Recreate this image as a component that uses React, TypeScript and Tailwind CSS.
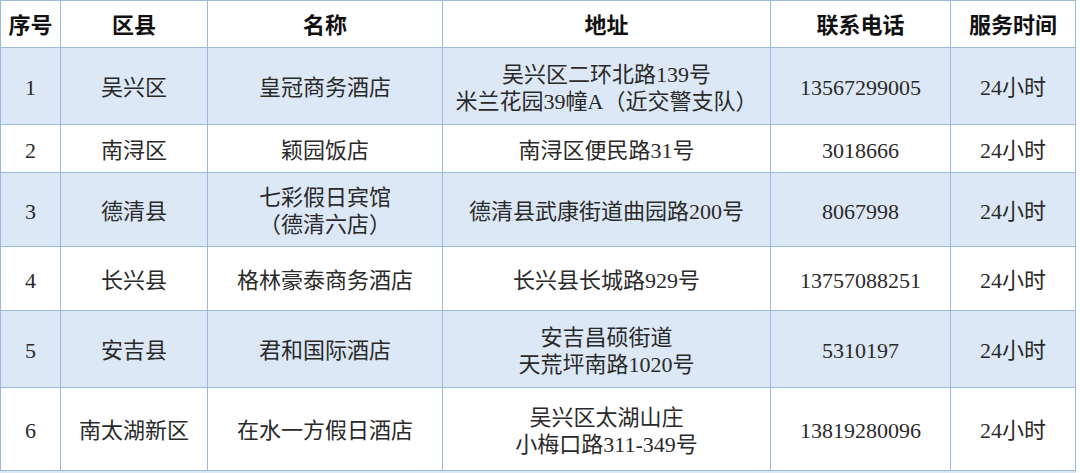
const cols = [60, 147, 235, 328, 180, 125];

const headers = ["序号", "区县", "名称", "地址", "联系电话", "服务时间"];

interface Row {
  no: string;
  district: string;
  name: string[];
  address: string[];
  phone: string;
  hours: string;
  height: number;
  shaded: boolean;
}

const rows: Row[] = [
  {
    no: "1",
    district: "吴兴区",
    name: ["皇冠商务酒店"],
    address: ["吴兴区二环北路139号", "米兰花园39幢A（近交警支队）"],
    phone: "13567299005",
    hours: "24小时",
    height: 77,
    shaded: true,
  },
  {
    no: "2",
    district: "南浔区",
    name: ["颖园饭店"],
    address: ["南浔区便民路31号"],
    phone: "3018666",
    hours: "24小时",
    height: 48,
    shaded: false,
  },
  {
    no: "3",
    district: "德清县",
    name: ["七彩假日宾馆", "（德清六店）"],
    address: ["德清县武康街道曲园路200号"],
    phone: "8067998",
    hours: "24小时",
    height: 74,
    shaded: true,
  },
  {
    no: "4",
    district: "长兴县",
    name: ["格林豪泰商务酒店"],
    address: ["长兴县长城路929号"],
    phone: "13757088251",
    hours: "24小时",
    height: 64,
    shaded: false,
  },
  {
    no: "5",
    district: "安吉县",
    name: ["君和国际酒店"],
    address: ["安吉昌硕街道", "天荒坪南路1020号"],
    phone: "5310197",
    hours: "24小时",
    height: 77,
    shaded: true,
  },
  {
    no: "6",
    district: "南太湖新区",
    name: ["在水一方假日酒店"],
    address: ["吴兴区太湖山庄", "小梅口路311-349号"],
    phone: "13819280096",
    hours: "24小时",
    height: 83,
    shaded: false,
  },
];

function Lines({ lines }: { lines: string[] }) {
  return (
    <>
      {lines.map((l) => (
        <div key={l}>{l}</div>
      ))}
    </>
  );
}

export default function App() {
  const cell = "border border-[#9db9dc] p-0 text-center align-middle";
  const body = `${cell} pt-[3px]`;
  return (
    <div
      className="h-[473px] w-[1080px] overflow-hidden bg-white text-[#2a2a2a]"
      style={{ fontFamily: '"Liberation Serif", "Noto Sans CJK SC", serif' }}
    >
      <table className="table-fixed border-collapse text-[22px] leading-[27px]">
        <colgroup>
          {cols.map((w, i) => (
            <col key={i} style={{ width: w }} />
          ))}
        </colgroup>
        <thead>
          <tr className="h-[47px]">
            {headers.map((h) => (
              <th key={h} className={`${cell} pt-[2px] font-semibold text-[#111] text-[22px]`}>
                {h}
              </th>
            ))}
          </tr>
        </thead>
        <tbody>
          {rows.map((r) => (
            <tr
              key={r.no}
              className={r.shaded ? "bg-[#dce8f5]" : "bg-white"}
              style={{ height: r.height }}
            >
              <td className={body}>{r.no}</td>
              <td className={body}>{r.district}</td>
              <td className={body}>
                <Lines lines={r.name} />
              </td>
              <td className={body}>
                <Lines lines={r.address} />
              </td>
              <td className={body}>{r.phone}</td>
              <td className={body}>{r.hours}</td>
            </tr>
          ))}
        </tbody>
      </table>
      <div className="h-[3px] w-[1076px] bg-[#dce8f5]" />
    </div>
  );
}
